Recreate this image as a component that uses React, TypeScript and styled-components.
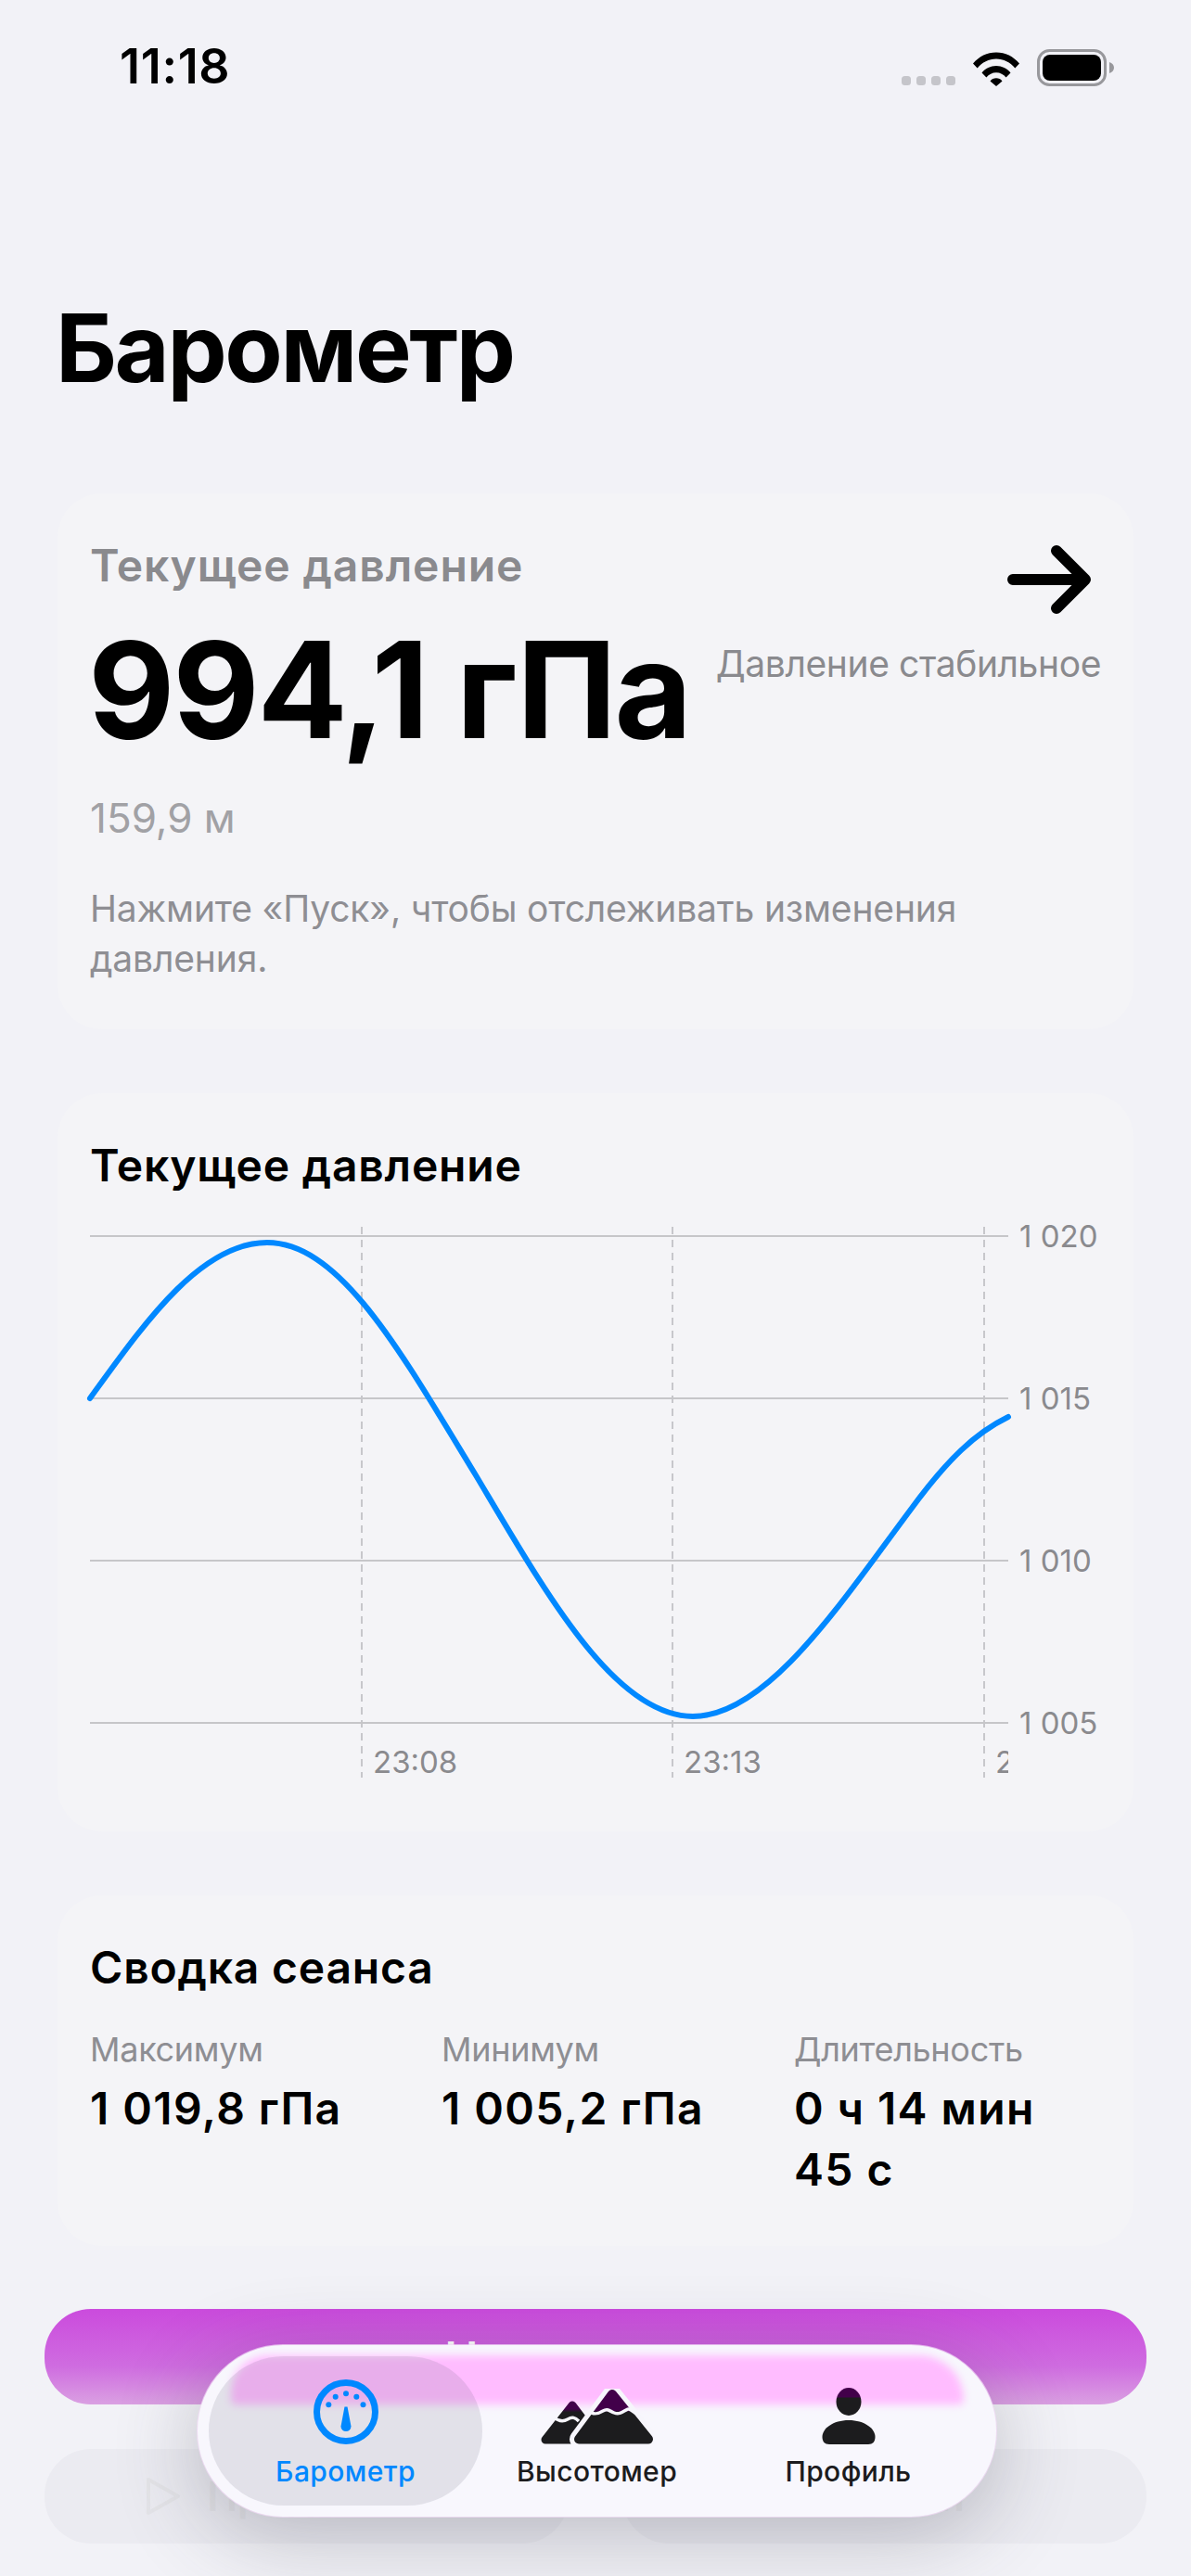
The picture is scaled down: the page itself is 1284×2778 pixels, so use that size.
import React from "react";
import styled, { createGlobalStyle } from "styled-components";

const GlobalStyle = createGlobalStyle`
  html, body {
    margin: 0;
    padding: 0;
    background: #f2f2f7;
  }
  * {
    box-sizing: border-box;
  }
`;

// pressure curve in chart coordinates
const curvePath =
  "M0 185C56 108 118 17 191 17C270 17 335 135 416 268C490 392 565 528 650 528C730 528 810 405 884 306C925 250 955 222 990 205";

const yTicks = [
  { label: "1 020", y: 10 },
  { label: "1 015", y: 185 },
  { label: "1 010", y: 360 },
  { label: "1 005", y: 535 },
];

const xTicks = [
  { label: "23:08", x: 293 },
  { label: "23:13", x: 628 },
  { label: "23:18", x: 964 },
];

const PressureChart = () => (
  <ChartSvg viewBox="0 0 1100 600">
    <defs>
      <clipPath id="plotClip">
        <rect x="0" y="0" width="990" height="600" />
      </clipPath>
    </defs>
    {xTicks.map((tick) => (
      <line
        key={tick.x}
        x1={tick.x}
        x2={tick.x}
        y1="0"
        y2="594"
        stroke="#bcbcc0"
        strokeWidth="1.6"
        strokeDasharray="8 6"
      />
    ))}
    {yTicks.map((tick) => (
      <g key={tick.label}>
        <line x1="0" x2="990" y1={tick.y} y2={tick.y} stroke="#c6c6c9" strokeWidth="2" />
        <AxisText x="1002" y={tick.y + 12}>
          {tick.label}
        </AxisText>
      </g>
    ))}
    <g clipPath="url(#plotClip)">
      {xTicks.map((tick) => (
        <AxisText key={tick.label} x={tick.x + 12} y="589">
          {tick.label}
        </AxisText>
      ))}
    </g>
    <path d={curvePath} fill="none" stroke="#0088ff" strokeWidth="6" strokeLinecap="round" />
  </ChartSvg>
);

const SignalDots = () => (
  <svg width="58" height="10" viewBox="0 0 58 10">
    {[0, 16, 32, 48].map((x) => (
      <rect key={x} x={x} y="0" width="10" height="10" rx="3.5" fill="#c5c5ca" />
    ))}
  </svg>
);

const WifiIcon = () => (
  <svg width="50" height="37" viewBox="0 0 50 37">
    <path d="M0 12.5C6.5 4.8 15.2 0.5 25 0.5S43.5 4.8 50 12.5L45.3 17.5C40.2 11.4 33 7.6 25 7.6S9.800 11.400 4.700 17.500Z" />
    <path d="M9.500 22.500C13.300 17.800 18.900 15 25 15S36.700 17.800 40.500 22.500L35.600 27.400C32.900 24.200 29.200 22.200 25 22.200S17.100 24.200 14.400 27.400Z" />
    <path d="M18.500 31.500C20 29.500 22.400 28.300 25 28.300S30 29.500 31.500 31.500L25 37Z" />
  </svg>
);

const BatteryIcon = () => (
  <svg width="84" height="40" viewBox="0 0 84 40">
    <rect x="1.500" y="1.500" width="72" height="37" rx="12" fill="none" stroke="#98989c" strokeWidth="3" />
    <rect x="6" y="6" width="63" height="28" rx="8" fill="#000" />
    <path d="M78 14C81 15 83 17 83 20S81 25 78 26Z" fill="#98989c" />
  </svg>
);

const TrendArrow = () => (
  <svg width="92" height="74" viewBox="0 0 92 74" fill="none">
    <path
      d="M6 37H84M53 6L84 37L53 68"
      stroke="#000"
      strokeWidth="12"
      strokeLinecap="round"
      strokeLinejoin="round"
    />
  </svg>
);

const GaugeIcon = () => (
  <svg width="70" height="70" viewBox="-35 -35 70 70">
    <circle cx="0" cy="0" r="31.500" fill="none" stroke="#0088ff" strokeWidth="7" />
    {[
      [-18.7, -7.7],
      [-11.3, -16.3],
      [0, -19.7],
      [11.3, -16.3],
      [18.5, -7.7],
    ].map(([cx, cy]) => (
      <circle key={cx} cx={cx} cy={cy} r="3" fill="#0088ff" />
    ))}
    <path d="M-1.500 -5.500L1.500 -5.500L5.500 15.500A5.500 5.500 0 0 1 -5.500 15.500Z" fill="#0088ff" />
  </svg>
);

// glass bar tints whatever sits over the pink band, the stop is where the band ends
const GlassInk = ({ id, stop }: { id: string; stop: number }) => (
  <linearGradient id={id} x1="0" x2="0" y1="0" y2="1">
    <stop offset={stop} stopColor="#42004a" />
    <stop offset={stop + 0.04} stopColor="#1c1c1e" />
  </linearGradient>
);

const MountainsIcon = () => (
  <svg width="122" height="60" viewBox="0 0 122 60">
    <defs>
      <GlassInk id="inkMountain" stop={0.36} />
      <linearGradient id="inkSmall" x1="0" x2="0" y1="0" y2="1">
        <stop offset="0.1" stopColor="#42004a" />
        <stop offset="0.2" stopColor="#1c1c1e" />
      </linearGradient>
    </defs>
    <path
      d="M5 55L34 18L62 55Z"
      fill="url(#inkSmall)"
      stroke="url(#inkSmall)"
      strokeWidth="9"
      strokeLinejoin="round"
    />
    <path d="M41 54.500L77 6L116 54.500Z" fill="#f7f6fc" stroke="#f7f6fc" strokeWidth="20" strokeLinejoin="round" />
    <path
      d="M41 54.500L77 6L116 54.500Z"
      fill="url(#inkMountain)"
      stroke="url(#inkMountain)"
      strokeWidth="10"
      strokeLinejoin="round"
    />
    <path d="M14 31C19 35 24 36 29 33S37 31 41 35" fill="none" stroke="#f7f6fc" strokeWidth="3.500" />
    <path
      d="M52 24C57 29 62 27 67 24S74 24 79 26S87 26 92 23S98 25 104 27"
      fill="none"
      stroke="#f7f6fc"
      strokeWidth="3.500"
    />
  </svg>
);

const PersonIcon = () => (
  <svg width="58" height="61" viewBox="0 0 58 61">
    <defs>
      <GlassInk id="inkPerson" stop={0.33} />
    </defs>
    <ellipse cx="29" cy="15" rx="13.500" ry="15" fill="url(#inkPerson)" />
    <path
      d="M0.500 53C0.500 44 12 35 29 35S57.500 44 57.500 53C57.500 58 55 61 50 61H8C3 61 0.500 58 0.500 53Z"
      fill="#1c1c1e"
    />
  </svg>
);

export default function App() {
  return (
    <Page>
      <GlobalStyle />
      <StatusBar>
        <Time>11:18</Time>
        <StatusIcons>
          <SignalDots />
          <WifiIcon />
          <BatteryIcon />
        </StatusIcons>
      </StatusBar>

      <LargeTitle>Барометр</LargeTitle>

      <Card>
        <CurrentRow>
          <CurrentMain>
            <CardLabel>Текущее давление</CardLabel>
            <PressureValue>994,1 гПа</PressureValue>
          </CurrentMain>
          <Trend>
            <TrendArrow />
            <TrendText>Давление стабильное</TrendText>
          </Trend>
        </CurrentRow>
        <Altitude>159,9 м</Altitude>
        <Hint>Нажмите «Пуск», чтобы отслеживать изменения давления.</Hint>
      </Card>

      <ChartCard>
        <CardTitle>Текущее давление</CardTitle>
        <PressureChart />
      </ChartCard>

      <Card>
        <CardTitle>Сводка сеанса</CardTitle>
        <SummaryGrid>
          <SummaryItem>
            <SummaryLabel>Максимум</SummaryLabel>
            <SummaryValue>1 019,8 гПа</SummaryValue>
          </SummaryItem>
          <SummaryItem>
            <SummaryLabel>Минимум</SummaryLabel>
            <SummaryValue>1 005,2 гПа</SummaryValue>
          </SummaryItem>
          <SummaryItem>
            <SummaryLabel>Длительность</SummaryLabel>
            <SummaryValue>
              0 ч 14 мин
              <br />
              45 с
            </SummaryValue>
          </SummaryItem>
        </SummaryGrid>
      </Card>

      <PrimaryButton>Начать сеанс</PrimaryButton>
      <ButtonRow>
        <GhostButton>
          <svg width="38" height="42" viewBox="0 0 38 42" fill="none">
            <path d="M3 3L35 21L3 39Z" stroke="#e4e4e8" strokeWidth="4" strokeLinejoin="round" />
          </svg>
          Продолжить
        </GhostButton>
        <GhostButton>
          <svg width="38" height="42" viewBox="0 0 38 42" fill="none">
            <rect x="3" y="5" width="32" height="32" rx="5" stroke="#e4e4e8" strokeWidth="4" />
          </svg>
          Стоп
        </GhostButton>
      </ButtonRow>

      <TabBar>
        <PinkBand />
        <TabItem $active>
          <IconSlot>
            <GaugeIcon />
          </IconSlot>
          <TabLabel $active>Барометр</TabLabel>
        </TabItem>
        <TabItem>
          <IconSlot>
            <MountainsIcon />
          </IconSlot>
          <TabLabel>Высотомер</TabLabel>
        </TabItem>
        <TabItem>
          <IconSlot>
            <PersonIcon />
          </IconSlot>
          <TabLabel>Профиль</TabLabel>
        </TabItem>
      </TabBar>
    </Page>
  );
}

const Page = styled.div`
  position: relative;
  width: 1284px;
  height: 2778px;
  overflow: hidden;
  display: flex;
  flex-direction: column;
  background: #f2f2f7;
  font-family: Inter, "Liberation Sans", sans-serif;
  color: #000;
`;

const StatusBar = styled.div`
  height: 110px;
  display: flex;
  justify-content: space-between;
  align-items: flex-start;
  padding: 42px 82px 0 129px;
`;

const Time = styled.div`
  font-size: 52px;
  line-height: 60px;
  font-weight: 600;
  letter-spacing: 0.7px;
`;

const StatusIcons = styled.div`
  display: flex;
  align-items: flex-end;
  gap: 19px;
  margin-top: 11px;

  svg:first-child {
    margin-bottom: 1px;
  }
`;

const LargeTitle = styled.h1`
  margin: 205px 0 0 60px;
  font-size: 102px;
  line-height: 120px;
  font-weight: 700;
  letter-spacing: -2.4px;
`;

const Card = styled.section`
  margin: 97px 62px 0;
  padding: 49px 35px;
  border-radius: 48px;
  background: #f4f4f7;

  & + & {
    margin-top: 69px;
  }
`;

const ChartCard = styled(Card)`
  padding-bottom: 52px;
`;

const CurrentRow = styled.div`
  display: flex;
  justify-content: space-between;
  align-items: flex-start;
`;

const CurrentMain = styled.div`
  flex-shrink: 0;
`;

const CardLabel = styled.div`
  font-size: 48px;
  line-height: 58px;
  font-weight: 600;
  letter-spacing: 0.9px;
  color: #8a8a8e;
  white-space: nowrap;
`;

const PressureValue = styled.div`
  margin: 20px 0 0 -2px;
  font-size: 144px;
  line-height: 170px;
  font-weight: 700;
  white-space: nowrap;
  letter-spacing: -2.3px;
`;

const Trend = styled.div`
  display: flex;
  flex-direction: column;
  align-items: flex-end;
  padding-top: 7px;

  svg {
    margin-right: 9px;
  }
`;

const TrendText = styled.div`
  margin-top: 30px;
  font-size: 39px;
  line-height: 48px;
  letter-spacing: -0.4px;
  color: #8a8a8e;
  white-space: nowrap;
`;

const Altitude = styled.div`
  margin-top: 26px;
  font-size: 44px;
  line-height: 54px;
  color: #a1a1a5;
`;

const Hint = styled.p`
  margin: 44px 0 0;
  font-size: 39px;
  line-height: 54px;
  letter-spacing: -0.15px;
  color: #8e8e93;
`;

const CardTitle = styled.h2`
  margin: 0;
  font-size: 48px;
  line-height: 58px;
  font-weight: 600;
  letter-spacing: 0.8px;
`;

const ChartSvg = styled.svg`
  display: block;
  width: 1100px;
  height: 600px;
  margin-top: 37px;
  overflow: visible;
`;

const AxisText = styled.text`
  font-family: Inter, "Liberation Sans", sans-serif;
  font-size: 33px;
  fill: #8a8a8e;
`;

const SummaryGrid = styled.div`
  display: grid;
  grid-template-columns: 379px 380px 1fr;
  margin-top: 36px;
`;

const SummaryItem = styled.div`
  display: flex;
  flex-direction: column;
  gap: 8px;
`;

const SummaryLabel = styled.div`
  font-size: 36px;
  line-height: 46px;
  letter-spacing: -0.3px;
  color: #8e8e93;
`;

const SummaryValue = styled.div`
  font-size: 48px;
  line-height: 66px;
  font-weight: 600;
  letter-spacing: 1.4px;
  white-space: nowrap;
`;

const PrimaryButton = styled.div`
  margin: 68px 48px 0;
  height: 103px;
  padding-top: 23px;
  border-radius: 50px;
  background: linear-gradient(#cb4bdd, #cf6ce0 60%, #daa0e2);
  color: #fff;
  font-size: 48px;
  font-weight: 600;
  text-align: center;
`;

const ButtonRow = styled.div`
  display: grid;
  grid-template-columns: 1fr 1fr;
  gap: 58px;
  margin: 48px 48px 0;
`;

const GhostButton = styled.div`
  height: 102px;
  border-radius: 50px;
  background: rgba(120, 120, 128, 0.05);
  display: flex;
  align-items: center;
  justify-content: center;
  gap: 28px;
  font-size: 44px;
  font-weight: 600;
  color: #e4e4e8;
`;

const TabBar = styled.nav`
  position: absolute;
  left: 213px;
  top: 2529px;
  width: 861px;
  height: 185px;
  padding: 12px;
  border-radius: 92px;
  display: grid;
  grid-template-columns: 295px 247px 295px;
  background: #f8f7fd;
  box-shadow: 0 0 0 1px rgba(244, 220, 248, 0.7), 0 20px 90px rgba(60, 60, 75, 0.3);
`;

const PinkBand = styled.div`
  position: absolute;
  left: 36px;
  top: 11px;
  width: 790px;
  height: 53px;
  border-radius: 50px 60px 6px 6px;
  background: #ffbcff;
  filter: blur(4px);
`;

const TabItem = styled.div<{ $active?: boolean }>`
  position: relative;
  border-radius: 81px;
  display: flex;
  flex-direction: column;
  align-items: center;
  padding-top: 25px;
  background: ${(props) => (props.$active ? "rgba(95, 95, 110, 0.14)" : "transparent")};
`;

const IconSlot = styled.div`
  height: 70px;
  display: flex;
  align-items: flex-end;
  justify-content: center;
`;

const TabLabel = styled.div<{ $active?: boolean }>`
  margin-top: 11px;
  font-size: 30px;
  line-height: 36px;
  font-weight: 500;
  letter-spacing: 0.4px;
  color: ${(props) => (props.$active ? "#0088ff" : "#1c1c1e")};
`;
